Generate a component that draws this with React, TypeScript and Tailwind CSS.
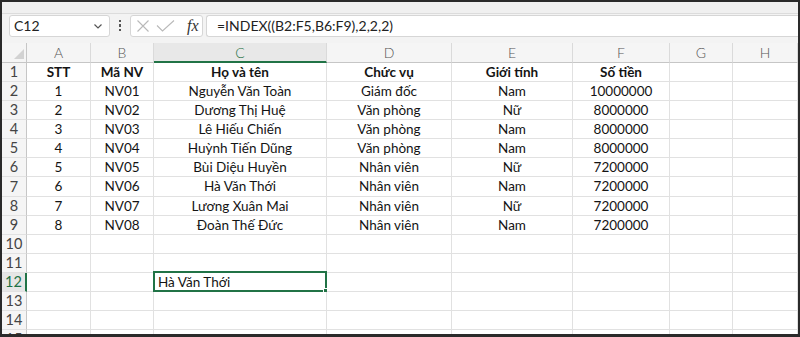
import React from "react";

const COLS = [64, 63, 173, 125, 121, 97, 63, 65];
const LETTERS = ["A", "B", "C", "D", "E", "F", "G", "H"];
const ROW_H = [19, 19, 19, 19, 19, 19, 20, 19, 19, 19, 19, 19, 19, 19, 19];

const DATA: string[][] = [
  ["STT", "Mã NV", "Họ và tên", "Chức vụ", "Giới tính", "Số tiền"],
  ["1", "NV01", "Nguyễn Văn Toàn", "Giám đốc", "Nam", "10000000"],
  ["2", "NV02", "Dương Thị Huệ", "Văn phòng", "Nữ", "8000000"],
  ["3", "NV03", "Lê Hiếu Chiến", "Văn phòng", "Nam", "8000000"],
  ["4", "NV04", "Huỳnh Tiến Dũng", "Văn phòng", "Nam", "8000000"],
  ["5", "NV05", "Bùi Diệu Huyền", "Nhân viên", "Nữ", "7200000"],
  ["6", "NV06", "Hà Văn Thới", "Nhân viên", "Nam", "7200000"],
  ["7", "NV07", "Lương Xuân Mai", "Nhân viên", "Nữ", "7200000"],
  ["8", "NV08", "Đoàn Thế Đức", "Nhân viên", "Nam", "7200000"],
];

const font = { fontFamily: "Lato, 'Noto Sans', sans-serif" };

function Row({ r, h }: { r: number; h: number }) {
  const data = DATA[r - 1];
  const selRow = r === 12;
  return (
    <div className="flex shrink-0" style={{ height: h }}>
      <div
        className={`w-[25px] shrink-0 flex items-center justify-center border-b border-[#e1e1e1] text-[14.5px] ${
          selRow
            ? "bg-[#e6e6e6] text-[#1e7145] border-r-2 border-r-[#217346]"
            : "bg-[#f5f5f5] text-[#444] border-r border-r-[#c6c6c6]"
        }`}
      >
        {r}
      </div>
      {COLS.map((w, c) => {
        const text = data ? data[c] : undefined;
        const isSel = selRow && c === 2;
        return (
          <div
            key={c}
            className={`shrink-0 relative flex items-center border-r border-b border-[#e1e1e1] bg-white text-[13.5px] text-[#141414] ${
              r === 1 ? "font-bold" : ""
            } ${isSel ? "justify-start pl-[4px]" : "justify-center"}`}
            style={{ width: w }}
          >
            {isSel ? "Hà Văn Thới" : text ?? ""}
            {isSel && (
              <>
                <div className="absolute left-[-1px] top-[-2px] right-[-1px] bottom-[-1px] border-2 border-[#217346]" />
                <div className="absolute right-[-3px] bottom-[-3px] w-[6px] h-[6px] bg-[#217346] border border-white" />
              </>
            )}
          </div>
        );
      })}
    </div>
  );
}

export default function App() {
  return (
    <div
      className="w-[800px] h-[337px] overflow-hidden bg-[#f3f3f3] border-2 border-b-[3px] border-[#2a2a2a] flex flex-col"
      style={font}
    >
      {/* formula bar */}
      <div className="h-[41px] shrink-0 flex flex-col">
        <div className="h-[12px] shrink-0 bg-[#f0f0f0] border-b border-[#dcdcdc]" />
        <div className="h-[23px] shrink-0 flex items-center">
          <div className="ml-[7px] w-[101px] h-[22px] bg-white border border-[#d6d6d6] rounded-[3px] flex items-center justify-between pl-[4px] pr-[4px]">
            <span className="text-[14px] text-[#222]">C12</span>
            <svg width="12" height="12" viewBox="0 0 12 12" className="mr-[1px]">
              <path d="M2.5 4.5 L6 8 L9.5 4.5" fill="none" stroke="#555" strokeWidth="1.2" />
            </svg>
          </div>
          <div className="w-[20px] flex flex-col items-center justify-center gap-[2px]">
            <div className="w-[2.5px] h-[2.5px] bg-[#555]" />
            <div className="w-[2.5px] h-[2.5px] bg-[#555]" />
            <div className="w-[2.5px] h-[2.5px] bg-[#555]" />
          </div>
          <div className="w-[73px] h-[22px] bg-white border border-[#d6d6d6] rounded-[3px] flex items-center pl-[5px] gap-[4px]">
            <svg width="14" height="14" viewBox="0 0 14 14">
              <path d="M1.5 1.5 L12.5 12.5 M12.5 1.5 L1.5 12.5" stroke="#b9b9b9" strokeWidth="1.1" fill="none" />
            </svg>
            <svg width="22" height="14" viewBox="0 0 22 14" className="ml-[1px]">
              <path d="M2 6.5 L7.5 12 L19 1.5" stroke="#b9b9b9" strokeWidth="1.1" fill="none" />
            </svg>
            <span
              className="ml-[6px] text-[16px] italic text-[#333] leading-none"
              style={{ fontFamily: "'Liberation Serif', 'DejaVu Serif', serif" }}
            >
              fx
            </span>
          </div>
          <div className="ml-[3px] flex-1 h-[22px] bg-white border border-r-0 border-[#d6d6d6] rounded-l-[3px] flex items-center pl-[10px]">
            <span className="text-[14px] text-[#222]">=INDEX((B2:F5,B6:F9),2,2,2)</span>
          </div>
        </div>
      </div>
      {/* column headers */}
      <div className="h-[20px] shrink-0 flex">
        <div className="w-[25px] shrink-0 bg-[#f5f5f5] border-r border-b border-[#c6c6c6] relative flex items-end justify-end pr-[2px] pb-[3px]">
          <svg width="10" height="10" viewBox="0 0 10 10">
            <path d="M10 0 L10 10 L0 10 Z" fill="#d2d2d2" />
          </svg>
        </div>
        {COLS.map((w, c) => (
          <div
            key={c}
            className={`shrink-0 flex items-center justify-center text-[14px] font-light border-r border-[#dadada] ${
              c === 2
                ? "bg-[#e8e8e8] text-[#1e7145] border-b-2 border-b-[#217346]"
                : "bg-[#f5f5f5] text-[#555] border-b border-b-[#c6c6c6]"
            }`}
            style={{ width: w }}
          >
            {LETTERS[c]}
          </div>
        ))}
      </div>
      {/* rows */}
      <div className="flex flex-col overflow-hidden">
        {ROW_H.map((h, i) => (
          <Row key={i} r={i + 1} h={h} />
        ))}
      </div>
    </div>
  );
}
